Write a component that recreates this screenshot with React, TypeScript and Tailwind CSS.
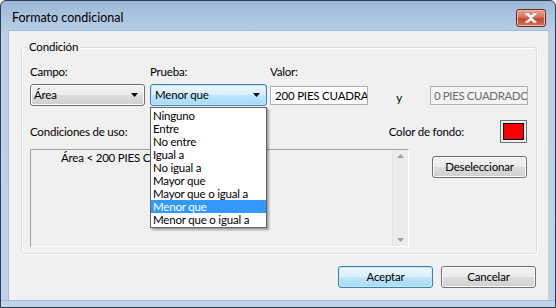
import React from "react";

const font = { fontFamily: 'Lato, "Liberation Sans", sans-serif' };

const items = [
	"Ninguno",
	"Entre",
	"No entre",
	"Igual a",
	"No igual a",
	"Mayor que",
	"Mayor que o igual a",
	"Menor que",
	"Menor que o igual a",
];

function Arrow() {
	return (
		<svg width="7" height="4" viewBox="0 0 7 4" className="shrink-0">
			<path d="M0 0h7L3.5 4z" fill="#000" />
		</svg>
	);
}

function WinButton({ label, primary }: { label: string; primary?: boolean }) {
	return (
		<button
			type="button"
			className={
				"h-[22px] w-[95px] rounded-[3px] border text-black flex items-center justify-center " +
				(primary
					? "border-[#3c7fb1] bg-[linear-gradient(#eaf6fd_0%,#d9f0fc_50%,#bee6fd_50%,#a7d9f5_100%)] shadow-[inset_0_0_0_1px_#c5e8fb]"
					: "border-[#707070] bg-[linear-gradient(#f2f2f2_0%,#ebebeb_50%,#dddddd_50%,#cfcfcf_100%)] shadow-[inset_0_0_0_1px_#fcfcfc]")
			}
		>
			{label}
		</button>
	);
}

export default function App() {
	return (
		<div
			style={font}
			className="w-[556px] h-[308px] flex flex-col rounded-t-[6px] border border-[#2e3e52] bg-[linear-gradient(#9db8d6_0px,#b9cfe7_30px,#bfd4ea_100%)] overflow-hidden text-[11.5px] tracking-[-0.2px] text-black"
		>
			{/* title bar */}
			<div className="h-[29px] flex items-start shrink-0">
				<div className="pl-[11px] pt-[9px] text-[12.5px] tracking-normal leading-[16px] text-black">
					Formato condicional
				</div>
				<div className="ml-auto mr-[9px] mt-[8px] w-[30px] h-[18px] rounded-[3px] border border-[#6b2a22] bg-[linear-gradient(#e8a493_0%,#d4745f_45%,#c2452c_55%,#d0735b_100%)] flex items-center justify-center shadow-[inset_0_0_0_1px_#efb7a7]">
					<svg width="12" height="10" viewBox="0 0 12 10">
						<path
							d="M2 1l4 3.2L10 1M2 9l4-3.2L10 9"
							stroke="#fff"
							strokeWidth="2.6"
							fill="none"
							strokeLinecap="square"
						/>
					</svg>
				</div>
			</div>

			{/* client */}
			<div className="mx-[7px] h-[270px] bg-[#f0f0f0] border-t border-l border-[#a6bcd4] flex flex-col">
				{/* group box */}
				<div className="relative mt-[16px] ml-[12px] w-[516px] h-[207px] rounded-[3px] border border-[#d5dfe5] shadow-[inset_1px_1px_0_#fff,1px_1px_0_#fff] px-[8px] pt-[16px] flex flex-col">
					<div className="absolute left-[5px] -top-[9px] px-[2px] bg-[#f0f0f0] leading-[16px]">
						Condición
					</div>

					{/* labels */}
					<div className="flex h-[16px] leading-[16px]">
						<div className="w-[120px]">Campo:</div>
						<div className="w-[120px]">Prueba:</div>
						<div>Valor:</div>
					</div>

					{/* controls */}
					<div className="flex items-center mt-[4px] h-[22px]">
						<div className="w-[115px] h-[22px] rounded-[3px] border border-[#707070] bg-[linear-gradient(#f2f2f2_0%,#ebebeb_50%,#dddddd_50%,#cfcfcf_100%)] shadow-[inset_0_0_0_1px_#fcfcfc] flex items-center pl-[3px] pr-[6px]">
							<span className="flex-1 leading-[16px]">Área</span>
							<Arrow />
						</div>
						<div className="relative ml-[5px] w-[117px] h-[22px]">
							<div className="w-full h-full rounded-[3px] border border-[#3c7fb1] bg-[linear-gradient(#eaf6fd_0%,#d9f0fc_50%,#bee6fd_50%,#a7d9f5_100%)] shadow-[inset_0_0_0_1px_#c5e8fb] flex items-center pl-[4px] pr-[6px]">
								<span className="flex-1 leading-[16px]">Menor que</span>
								<Arrow />
							</div>
							{/* dropdown list */}
							<div className="absolute left-0 top-[23px] w-[117px] bg-white border border-[#646464] shadow-[2px_2px_2px_rgba(0,0,0,0.35)] py-[1px] z-10">
								{items.map((it) => (
									<div
										key={it}
										className={
											"h-[13px] leading-[13px] pl-[2px] whitespace-nowrap overflow-hidden " +
											(it === "Menor que"
												? "bg-[#3399ff] text-white"
												: "")
										}
									>
										{it}
									</div>
								))}
							</div>
						</div>
						<div className="ml-[3px] w-[98px] h-[19px] border border-[#abadb3] bg-white px-[4px] leading-[17px] overflow-hidden whitespace-nowrap">
							200 PIES CUADRADOS
						</div>
						<div className="w-[62px] h-[22px] flex items-end justify-center leading-[16px]">
							y
						</div>
						<div className="w-[98px] h-[19px] border border-[#adb2b5] bg-[#f4f4f4] px-[3px] leading-[17px] overflow-hidden whitespace-nowrap text-[#6d6d6d] tracking-[-0.4px] text-center">
							0 PIES CUADRADO
						</div>
					</div>

					{/* row 3 */}
					<div className="flex items-center mt-[14px] h-[23px]">
						<div className="leading-[16px]">Condiciones de uso:</div>
						<div className="ml-auto leading-[16px]">Color de fondo:</div>
						<div className="ml-[36px] mr-[1px] w-[27px] h-[23px] border border-[#707070] p-[2px] bg-[#f0f0f0]">
							<div className="w-full h-full bg-[#ff0000] border border-black" />
						</div>
					</div>

					{/* list + button */}
					<div className="flex mt-[6px]">
						<div className="w-[379px] h-[98px] border-t border-l border-[#a0a0a0] border-b border-r border-b-white border-r-white flex">
							<div className="flex-1 pl-[30px] pt-[1px] leading-[14px] whitespace-nowrap overflow-hidden">
								Área &lt; 200 PIES CUADRADOS
							</div>
							<div className="w-[16px] border-l border-[#e2e2e2] bg-[#ececec] flex flex-col items-center justify-between py-[4px]">
								<svg width="7" height="4" viewBox="0 0 7 4">
									<path d="M0 4h7L3.5 0z" fill="#a0a0a0" />
								</svg>
								<svg width="7" height="4" viewBox="0 0 7 4">
									<path d="M0 0h7L3.5 4z" fill="#a0a0a0" />
								</svg>
							</div>
						</div>
						<div className="ml-auto mt-[7px] mr-[1px]">
							<WinButton label="Deseleccionar" />
						</div>
					</div>
				</div>

				{/* bottom buttons */}
				<div className="flex justify-end gap-[8px] mt-[12px] mr-[12px]">
					<WinButton label="Aceptar" primary />
					<WinButton label="Cancelar" />
				</div>
			</div>
			<div className="flex-1 border-t border-[#a6bcd4]" />
		</div>
	);
}
